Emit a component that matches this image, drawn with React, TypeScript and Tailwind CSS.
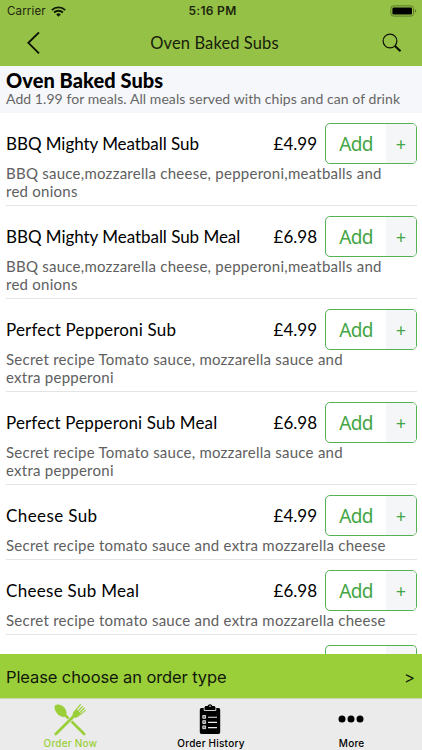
type Item = { name: string; tracking: string; price: string; lines: string[] };

const meat = ["BBQ sauce,mozzarella cheese, pepperoni,meatballs and", "red onions"];
const pepperoni = ["Secret recipe Tomato sauce, mozzarella sauce and", "extra pepperoni"];
const cheese = ["Secret recipe tomato sauce and extra mozzarella cheese"];

const items: Item[] = [
  { name: "BBQ Mighty Meatball Sub", tracking: "tracking-[-0.05px]", price: "£4.99", lines: meat },
  { name: "BBQ Mighty Meatball Sub Meal", tracking: "tracking-[-0.04px]", price: "£6.98", lines: meat },
  { name: "Perfect Pepperoni Sub", tracking: "tracking-[0.18px]", price: "£4.99", lines: pepperoni },
  { name: "Perfect Pepperoni Sub Meal", tracking: "tracking-[0.14px]", price: "£6.98", lines: pepperoni },
  { name: "Cheese Sub", tracking: "tracking-[0.4px]", price: "£4.99", lines: cheese },
  { name: "Cheese Sub Meal", tracking: "tracking-[0.3px]", price: "£6.98", lines: cheese },
];

function AddButton() {
  return (
    <button className="flex h-[41px] w-[92px] shrink-0 overflow-hidden rounded-[5px] border border-[#55b254] bg-white font-['Noto_Sans',sans-serif] text-[#43a545]">
      <span className="flex h-full w-[60px] items-center justify-center pt-px text-[19px] tracking-[-0.6px]">Add</span>
      <span className="flex h-full flex-1 items-center justify-center bg-[#f4f6f8] pt-[2px] text-[18px]">+</span>
    </button>
  );
}

function Row({ item }: { item: Item }) {
  return (
    <li className="ml-[6px] mr-[5px] border-b border-[#e4e4e4] pt-[10px] pb-[5px]">
      <div className="flex h-[41px] items-center">
        <span className={`flex-1 whitespace-nowrap text-[17px] leading-6 text-black ${item.tracking}`}>{item.name}</span>
        <span className="mr-[8px] text-[17px] leading-6 text-black">{item.price}</span>
        <AddButton />
      </div>
      <div className="text-[15px] leading-[18px] tracking-[0.25px] text-[#606060]">
        {item.lines.map((line) => (
          <p key={line} className="whitespace-nowrap">{line}</p>
        ))}
      </div>
    </li>
  );
}

function StatusBar() {
  return (
    <div className="grid h-[22px] grid-cols-3 items-center pl-[7px] pr-[5px] font-['Inter',sans-serif] text-[11.5px] text-[#1c260c]">
      <div className="flex items-center gap-[5px]">
        <span className="pt-px tracking-[0.15px]">Carrier</span>
        <svg width="15" height="11" viewBox="0 0 15 11" fill="none" stroke="#111a05" strokeWidth="1.9">
          <path d="M.8 4.1a9.6 9.6 0 0 1 13.4 0M3.1 6.5a6.3 6.3 0 0 1 8.8 0" />
          <path d="M7.5 10.8 5.2 8.4a3.3 3.3 0 0 1 4.6 0Z" fill="#111a05" stroke="none" />
        </svg>
      </div>
      <span className="pl-px text-center text-[12px] font-semibold tracking-[0.3px]">5:16 PM</span>
      <svg className="justify-self-end" width="27" height="12" viewBox="0 0 27 12">
        <rect x=".9" y=".9" width="22.6" height="10.2" rx="2.6" fill="none" stroke="#5c7a29" />
        <rect x="2.4" y="2.4" width="19.6" height="7.2" rx="1.4" fill="#000" />
        <path d="M24.8 4.2v3.6q1.5-.7 1.5-1.8t-1.5-1.8" fill="#5c7a29" />
      </svg>
    </div>
  );
}

function CutleryIcon() {
  return (
    <svg width="34" height="34" viewBox="0 0 34 34" fill="#9bcf3a" stroke="#9bcf3a">
      <path d="M11 11 31.2 31" strokeWidth="2.6" strokeLinecap="round" fill="none" />
      <path d="M2.2 2.2C5 .4 11.2 2.6 13 7.4c.8 2.4.8 4.2-.6 5.6s-3.8 1-5.6-.2C2.4 10 .4 4.2 2.2 2.2Z" stroke="none" />
      <path d="M23 11 2.8 31" strokeWidth="4.2" stroke="#ebebeb" fill="none" />
      <path d="M23 11 2.8 31" strokeWidth="2.8" strokeLinecap="round" fill="none" />
      <path d="M20.4 13.8c-1.5-1.8-.8-4 .6-5.5L23.4 6l4.6 5-2.2 2.2c-1.7 1.6-3.8 2-5.4.6Z" stroke="none" />
      <path d="m22.4 7.6 5-6M24.2 9l5.2-5.4M26 10.2l5.2-5M27.2 11.6l5.2-4.2" strokeWidth="1.2" strokeLinecap="round" fill="none" />
    </svg>
  );
}

function ClipboardIcon() {
  return (
    <svg width="22" height="31" viewBox="0 0 22 31">
      <path d="M2.4 4h2.8l1.2-2h2.2a2.5 2.5 0 0 1 4.8 0h2.2l1.2 2h2.8q1.6 0 1.6 1.7v22.6q0 1.7-1.6 1.7H2.4Q.8 30 .8 28.3V5.7Q.8 4 2.4 4Z" fill="#000" />
      <path d="M5.2 4.2v2.3h11.6V4.2" fill="none" stroke="#ebebeb" strokeWidth=".9" />
      <circle cx="11" cy="2.2" r=".8" fill="#ebebeb" />
      <path d="M9 13.2h9M9 18.4h9M9 23.6h9" stroke="#ebebeb" strokeWidth="1.1" />
      <path d="M3.8 11.5h2.8v2.8H3.8zM3.8 16.7h2.8v2.8H3.8zM3.8 21.9h2.8v2.8H3.8z" fill="#777" stroke="#ebebeb" strokeWidth=".9" />
    </svg>
  );
}

export default function App() {
  return (
    <div className="flex h-[750px] w-[422px] flex-col overflow-hidden bg-white font-['Lato',sans-serif]">
      <header className="h-[66px] shrink-0 bg-[#96c147]">
        <StatusBar />
        <div className="flex h-[42px] items-center justify-between pl-[26px] pr-[20px]">
          <svg width="15" height="24" viewBox="0 0 15 24" fill="none" stroke="#0c1203" strokeWidth="1.9">
            <path d="M13 1.4 2.4 11.8 13 22.4" />
          </svg>
          <h1 className="pl-[6px] text-[16.5px] tracking-[0.1px] text-[#16200a]">Oven Baked Subs</h1>
          <svg width="20" height="20" viewBox="0 0 20 20" fill="none" stroke="#0c1203">
            <circle cx="8" cy="8" r="6.9" strokeWidth="1.2" />
            <path d="m13 13 5.5 5.2" strokeWidth="2.2" />
          </svg>
        </div>
      </header>
      <section className="h-[47px] shrink-0 bg-[#f6f7fa] pl-[6px] pt-[2px]">
        <h2 className="text-[20px] font-black leading-6 tracking-[0.05px] text-black">Oven Baked Subs</h2>
        <p className="whitespace-nowrap text-[14px] leading-[14px] tracking-[0.07px] text-[#666]">Add 1.99 for meals. All meals served with chips and can of drink</p>
      </section>
      <ul className="min-h-0 flex-1 overflow-hidden">
        {items.map((item) => (
          <Row key={item.name} item={item} />
        ))}
        <li className="mr-[5px] flex justify-end pt-[10px]">
          <div className="flex h-[9px] w-[92px] justify-end overflow-hidden rounded-t-[5px] border border-b-0 border-[#55b254] bg-white">
            <span className="h-full w-[30px] bg-[#f4f6f8]" />
          </div>
        </li>
      </ul>
      <div className="flex h-[44px] shrink-0 items-center justify-between bg-[#9bcf3a] pl-[6px] pr-[7px] pt-[2px] font-['Inter',sans-serif] text-[16.5px] text-[#10180a]">
        <span className="tracking-[-0.1px]">Please choose an order type</span>
        <span>&gt;</span>
      </div>
      <nav className="grid h-[52px] shrink-0 grid-cols-3 border-t border-[#c9d7ad] bg-[#ebebeb] font-['Inter',sans-serif] text-[10px] font-medium tracking-[0.22px] text-black">
        <div className="flex flex-col items-center pt-[3px] text-[#9bcf3a]">
          <span className="flex h-[35px] items-center"><CutleryIcon /></span>
          <span className="leading-3">Order Now</span>
        </div>
        <div className="flex flex-col items-center pt-[3px]">
          <span className="flex h-[35px] items-center pr-[2px]"><ClipboardIcon /></span>
          <span className="leading-3">Order History</span>
        </div>
        <div className="flex flex-col items-center pt-[3px]">
          <span className="flex h-[35px] items-center pb-[2px] pr-px">
            <svg width="26" height="8" viewBox="0 0 26 8">
              <circle cx="4" cy="4" r="3.5" /><circle cx="13" cy="4" r="3.5" /><circle cx="22" cy="4" r="3.5" />
            </svg>
          </span>
          <span className="leading-3">More</span>
        </div>
      </nav>
    </div>
  );
}
